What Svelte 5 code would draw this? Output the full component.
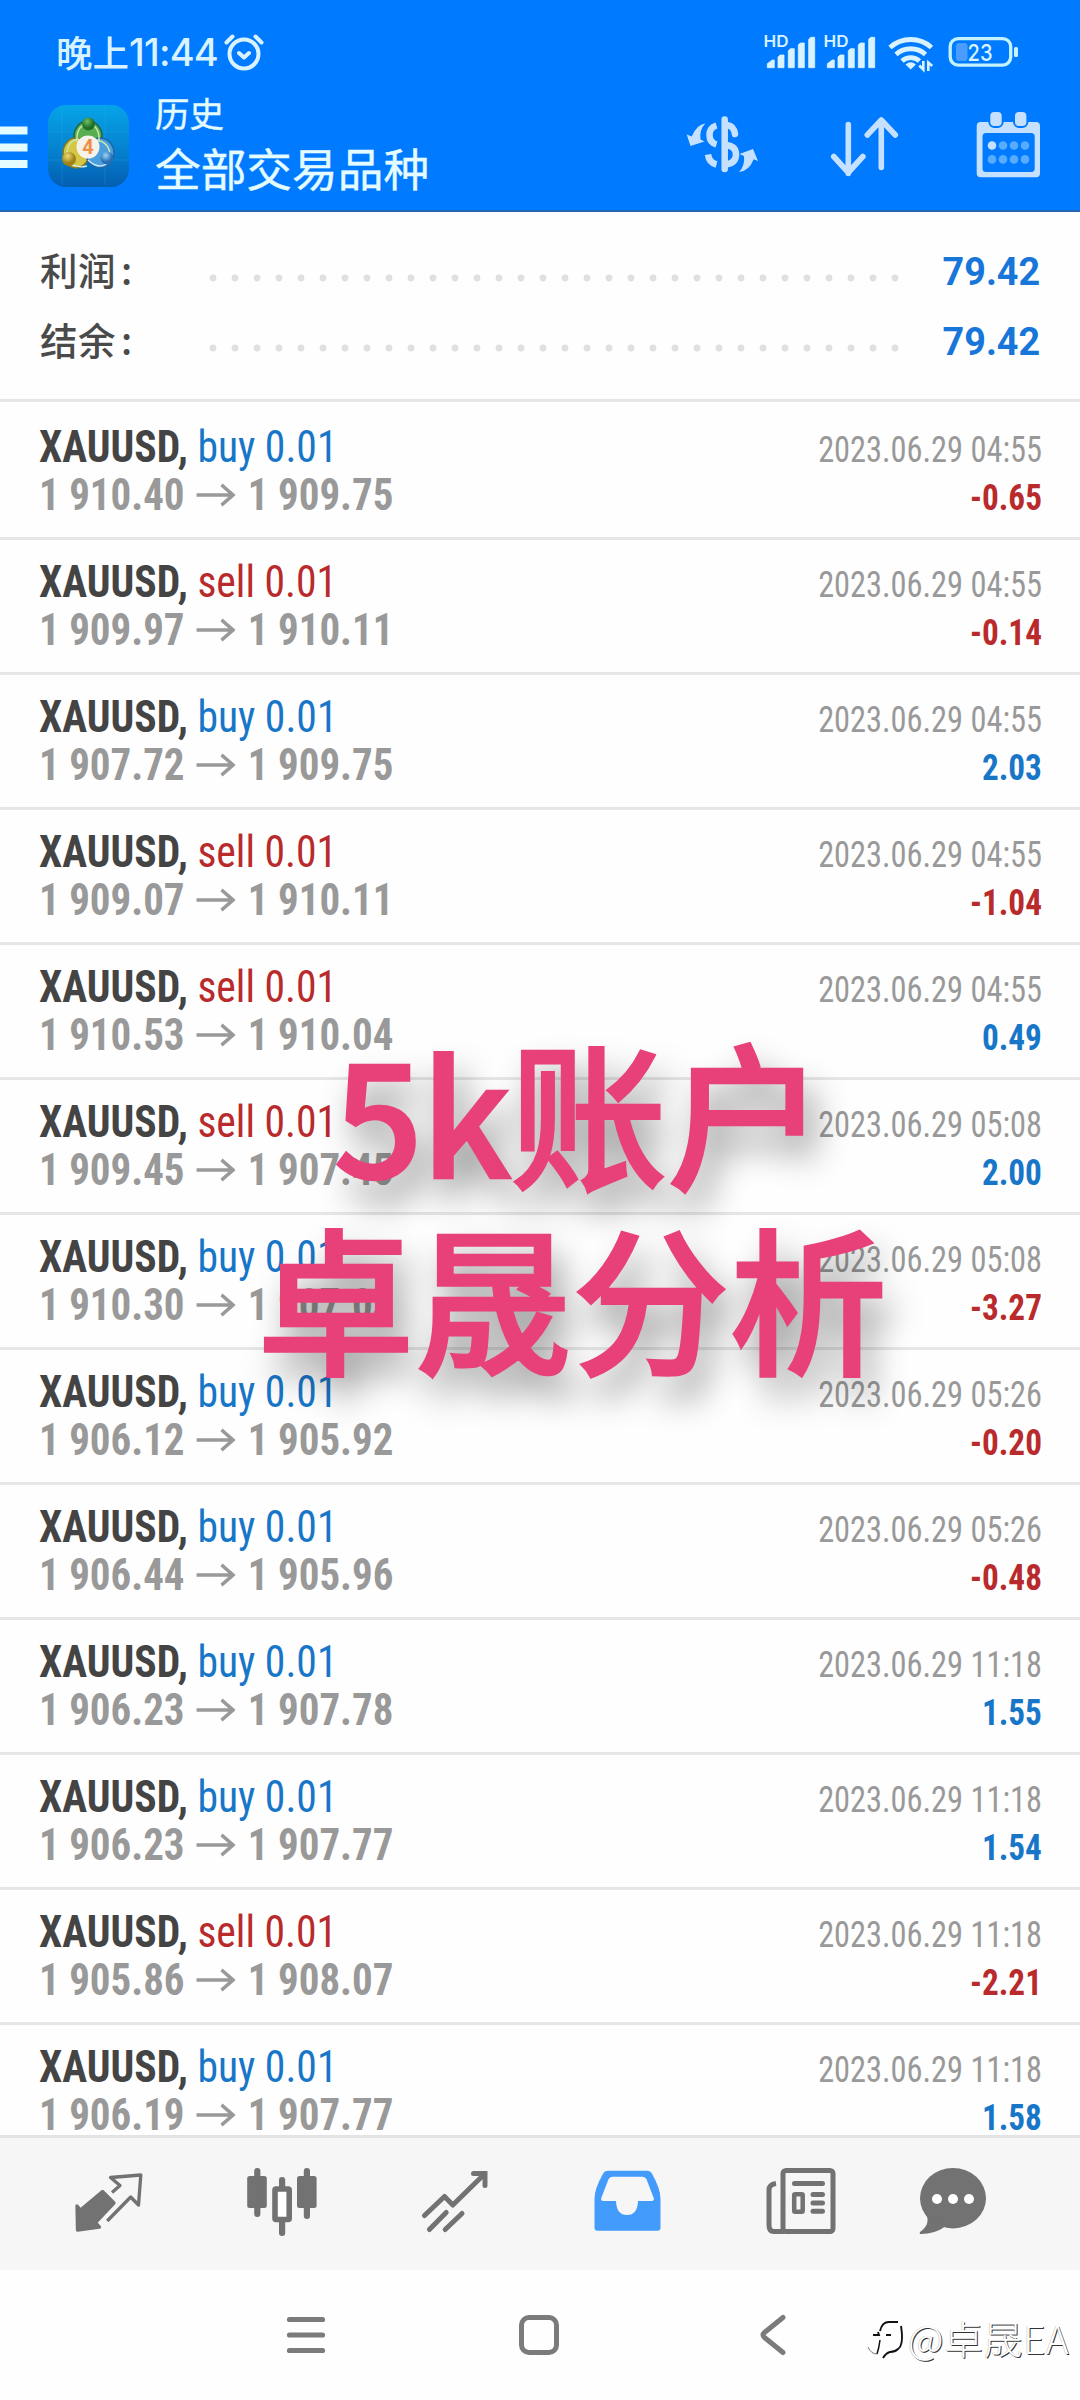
<script>
  const trades = [
    ['buy', '1 910.40', '1 909.75', '04:55', '-0.65'],
    ['sell', '1 909.97', '1 910.11', '04:55', '-0.14'],
    ['buy', '1 907.72', '1 909.75', '04:55', '2.03'],
    ['sell', '1 909.07', '1 910.11', '04:55', '-1.04'],
    ['sell', '1 910.53', '1 910.04', '04:55', '0.49'],
    ['sell', '1 909.45', '1 907.45', '05:08', '2.00'],
    ['buy', '1 910.30', '1 907.03', '05:08', '-3.27'],
    ['buy', '1 906.12', '1 905.92', '05:26', '-0.20'],
    ['buy', '1 906.44', '1 905.96', '05:26', '-0.48'],
    ['buy', '1 906.23', '1 907.78', '11:18', '1.55'],
    ['buy', '1 906.23', '1 907.77', '11:18', '1.54'],
    ['sell', '1 905.86', '1 908.07', '11:18', '-2.21'],
    ['buy', '1 906.19', '1 907.77', '11:18', '1.58']
  ].map(([side, open, close, time, profit]) => ({ side, open, close, time, profit }));

  const summary = [
    { label: '利润', value: '79.42' },
    { label: '结余', value: '79.42' }
  ];
  const dots = Array.from({ length: 32 }, (_, i) => 4 + i * 22);
</script>

{#snippet signal()}
  <svg width="60" height="50" viewBox="0 0 60 50" fill="#d8f3ff">
    <text x="3.5" y="17.3" font-size="15.5" font-weight="600" textLength="25" lengthAdjust="spacingAndGlyphs">HD</text>
    <path d="M7.3 37.7v-4l5-3.7h2v7.7zM18 37.7V27l2-2h4v12.7zM28.3 37.7v-17l2-2h4v19zM38.3 37.7V15l2-2h4v24.7zM48.7 37.7V9.300l2-2h4v30.400z" stroke="#d8f3ff" stroke-width=".8" stroke-linejoin="round" />
  </svg>
{/snippet}

<main class="screen">
  <header>
    <div class="status">
      <span class="clock"><span class="cjk">晚上</span><span class="time">11:44</span></span>
      <svg class="alarm" width="44" height="44" viewBox="0 0 44 44" fill="none" stroke="#d8f3ff" stroke-width="4" stroke-linecap="round" stroke-linejoin="round">
        <circle cx="22" cy="24" r="14.500" /><path d="M17 23l5 4.500 5-4.500M4.500 12.500l6-6M39.500 12.500l-6-6" />
      </svg>
      <div class="indicators">
        {@render signal()}
        {@render signal()}
        <svg width="65" height="50" viewBox="0 0 65 50" fill="none" stroke="#d8f3ff" stroke-width="4.900">
          <path d="M10 17.500a31 31 0 0 1 41.500 0M16 24.500a22 22 0 0 1 29.500 0M22 31a13 13 0 0 1 17.500 0" />
          <path d="M25.500 34.500q5.200-4.500 10.400 0l-5.200 5z" fill="#d8f3ff" stroke="none" />
          <path d="M43.300 31v8.500l-4-4M48.300 41v-8.500l4 3.500" stroke-width="2.600" />
        </svg>
        <svg width="78" height="50" viewBox="0 0 78 50">
          <rect x="5.200" y="8.600" width="60.500" height="26.500" rx="8" fill="none" stroke="#c4f2ff" stroke-width="3.300" />
          <rect x="11" y="13" width="11.500" height="18" rx="3" fill="#4a9dff" />
          <rect x="69" y="17" width="4" height="10" rx="1.500" fill="#c4f2ff" />
          <text x="22.500" y="31" font-size="23" font-weight="500" fill="#d8f3ff" textLength="25" lengthAdjust="spacingAndGlyphs">23</text>
        </svg>
      </div>
    </div>
    <div class="appbar">
      <svg class="burger" width="47" height="50" viewBox="0 0 47 50" fill="#e4fbff">
        <path d="M0 4.500h27.500v8H0zM0 21.500h27.500v8H0zM0 38h27.500v8H0z" />
      </svg>
      <svg class="logo" width="84" height="84" viewBox="0 0 84 84">
        <defs>
          <linearGradient id="bg" x1="0" y1="0" x2="0" y2="1"><stop offset="0" stop-color="#06a4e8" /><stop offset=".55" stop-color="#0582cf" /><stop offset="1" stop-color="#035db0" /></linearGradient>
          <radialGradient id="gr" cx=".4" cy=".3"><stop offset="0" stop-color="#6fc060" /><stop offset="1" stop-color="#1f6f2a" /></radialGradient>
          <radialGradient id="ye" cx=".4" cy=".3"><stop offset="0" stop-color="#f0dc70" /><stop offset="1" stop-color="#9d811a" /></radialGradient>
          <radialGradient id="bl" cx=".4" cy=".3"><stop offset="0" stop-color="#9ad6f8" /><stop offset="1" stop-color="#246eb5" /></radialGradient>
        </defs>
        <rect x="1" y="1" width="81" height="82" rx="18" fill="url(#bg)" />
        <path d="M1 28h81M1 56h81M15 3v78M58 3v78" stroke="#39b4ef" stroke-width=".7" opacity=".35" />
        <ellipse cx="41" cy="32" rx="14" ry="15" fill="#58ae50" stroke="#1c6740" stroke-width="1.500" />
        <ellipse cx="29" cy="49" rx="13" ry="15" fill="#d5c644" stroke="#807724" stroke-width="1.500" />
        <ellipse cx="53" cy="49" rx="14" ry="15" fill="#4b9edf" stroke="#2165a2" stroke-width="1.500" />
        <path d="M30 38q-1-17 11-18 12 1 11 18M20 49q1-13 12-14M50 36q13 3 13 16" fill="none" stroke="#c5e7a8" stroke-width="1.500" />
        <path d="M20 57q9 8 20 5M41 56q10 10 20 3" fill="none" stroke="#d0eafa" stroke-width="1.300" />
        <circle cx="41.500" cy="20" r="6.500" fill="url(#gr)" />
        <circle cx="22" cy="55" r="7" fill="url(#ye)" />
        <circle cx="60" cy="54" r="6.500" fill="url(#bl)" />
        <circle cx="41" cy="43" r="11.500" fill="#f5f2e9" />
        <text x="41" y="50" text-anchor="middle" font-size="20" font-weight="700" fill="#ee8f45">4</text>
      </svg>
      <div class="titles">
        <span class="sub">历史</span>
        <span class="title">全部交易品种</span>
      </div>
      <div class="actions">
        <svg width="80" height="80" viewBox="0 0 80 80" fill="none" stroke="#c6e1ff" stroke-width="6.500">
          <path d="M42.700 15.500v49.500" stroke-linecap="round" />
          <path d="M45 21q7 1 8 9M44 41q10 1 10 9.500T44 60.500" stroke-linecap="round" />
          <path d="M34.500 21.500q-7 2-7 9.500t7 9.500M26 50.500q1 8 8.500 10" />
          <path d="M4.700 30.500l5 2q5-12 13.600-13-6 6-4.800 16l4 2-14 4.500zM57.500 50l13.500-5 5 12-4.300-1.700q-4.700 12-14.700 12.700 6-6 5-16z" fill="#c6e1ff" stroke="none" />
        </svg>
        <svg width="80" height="80" viewBox="0 0 80 80" fill="none" stroke="#c6e1ff" stroke-width="5.600" stroke-linecap="round" stroke-linejoin="round">
          <path d="M23.300 20.500v49M8.700 52.500l14.600 16 14.600-16M56.300 63.500v-47M42.300 31l14-15 14 15" />
        </svg>
        <svg width="80" height="80" viewBox="0 0 80 80" fill="#c6e1ff">
          <path fill-rule="evenodd" d="M12.700 18h55.300q4 0 4 4v47.300q0 4-4 4H12.700q-4 0-4-4V22q0-4 4-4zM18 29q-3.500 0-3.500 3.500V64.500q0 3.500 3.500 3.500h45.200q3.500 0 3.500-3.500V32.500q0-3.500-3.500-3.500z" />
          <g stroke="#007aff" stroke-width="2"><rect x="21.300" y="7" width="13.400" height="16" rx="5" /><rect x="46" y="7" width="13.400" height="16" rx="5" /></g>
          <circle cx="24" cy="41.500" r="4.300" />
          <g fill="#58acff"><circle cx="35" cy="41.500" r="4.300" /><circle cx="46" cy="41.500" r="4.300" /><circle cx="57" cy="41.500" r="4.300" /><circle cx="24" cy="55.400" r="4.300" /><circle cx="35" cy="55.400" r="4.300" /><circle cx="46" cy="55.400" r="4.300" /><circle cx="57" cy="55.400" r="4.300" /></g>
        </svg>
      </div>
    </div>
  </header>

  <section class="summary">
    {#each summary as item}
      <div class="sumrow">
        <span class="label">{item.label}<i>:</i></span>
        <svg class="leader" width="700" height="8" viewBox="0 0 700 8" fill="#e0e0e0">
          {#each dots as x}<circle cx={x} cy="4" r="3.400" />{/each}
        </svg>
        <b class="value">{item.value}</b>
      </div>
    {/each}
  </section>

  <section class="list">
    {#each trades as t}
      <article>
        <div class="left">
          <div class="name"><b>XAUUSD,</b> <span class={t.side}>{t.side} 0.01</span></div>
          <div class="prices">
            <span class="price">{t.open}</span>
            <svg width="42" height="24" viewBox="0 0 42 24" fill="none" stroke="#999" stroke-width="3.600"><path d="M0 12h39M27 1.800L39.500 12 27 22.200" /></svg>
            <span class="price">{t.close}</span>
          </div>
        </div>
        <div class="right">
          <div class="date">2023.06.29 {t.time}</div>
          <div class="profit" class:loss={t.profit.startsWith('-')}>{t.profit}</div>
        </div>
      </article>
    {/each}
  </section>

  <nav class="tabs">
    <svg width="80" height="80" viewBox="0 0 80 80" fill="none" stroke="#727272" stroke-width="3.300" stroke-linejoin="round">
      <path d="M8 45l3.500 4L33.500 30.500 45 42 26.500 61.500l4 4.500L8.500 69z" fill="#727272" />
      <path d="M43 31.500l8-7-9.500-8L71.800 14 69.500 44l-7.800-8-23.500 24" />
    </svg>
    <svg width="80" height="80" viewBox="0 0 80 80" fill="#727272">
      <rect x="5.200" y="15" width="19.600" height="32" rx="2.500" /><rect x="12.200" y="7" width="6.200" height="49" rx="3" />
      <rect x="55" y="15" width="19.600" height="32" rx="2.500" /><rect x="61.800" y="7" width="6.200" height="51" rx="3" />
      <rect x="37" y="16" width="6.200" height="12" rx="3" /><rect x="37" y="58" width="6.200" height="17" rx="3" />
      <rect x="33" y="28" width="14.200" height="30.500" rx="1" fill="#fff" stroke="#727272" stroke-width="5.600" />
    </svg>
    <svg width="80" height="80" viewBox="0 0 80 80" fill="none" stroke="#727272" stroke-width="5" stroke-linecap="round">
      <path d="M9.500 54.500L29.500 35.500l8.300 8.500L69 13.500M14.400 68.500l16.800-17M30.200 68.500l16.800-16" stroke-linejoin="round" /><path d="M58.500 12.500H70v12" />
    </svg>
    <svg width="80" height="80" viewBox="0 0 80 80" fill="#439cfb">
      <path fill-rule="evenodd" d="M20 9.700h39q3.500 0 5 3 8.500 15 8.500 25v29q0 3-3 3h-60q-3 0-3-3v-29q0-10 8.500-25 1.500-3 5-3zM24.500 15.700q-3 0-4 2.500L13.300 37q-.8 3 2 3H28q.5 14 11 14t11-14h13.700q2.800 0 2-3L58.500 18.200q-1-2.500-4-2.500z" />
    </svg>
    <svg width="80" height="80" viewBox="0 0 80 80" fill="none" stroke="#727272" stroke-width="5">
      <rect x="22" y="9.500" width="50" height="61" rx="3" /><path d="M15 22.500q-7 1-7 6.500v35q0 6.500 5 6.500h10" />
      <path d="M33.500 22.500h28M52 33.500h9.500M52 42h9.500M52 50.300h9.500" stroke-linecap="round" /><rect x="33.200" y="33.200" width="8.500" height="17.500" rx="1" stroke-width="4.500" />
    </svg>
    <svg width="80" height="80" viewBox="0 0 80 80" fill="#727272">
      <ellipse cx="40" cy="37.200" rx="33" ry="30.200" /><path d="M13 53q5 10-6 18-1 2 1 2 14 0 25-8z" />
      <g fill="#fff"><circle cx="24" cy="38" r="5" /><circle cx="40" cy="38" r="5" /><circle cx="56" cy="38" r="5" /></g>
    </svg>
  </nav>

  <nav class="system">
    <svg width="50" height="50" viewBox="0 0 50 50" stroke="#7b7b7b" stroke-width="5.200" stroke-linecap="round"><path d="M8.500 9.500h33M8.500 25h33M8.500 40.500h33" /></svg>
    <svg width="50" height="50" viewBox="0 0 50 50" fill="none" stroke="#7b7b7b" stroke-width="5"><rect x="7.500" y="7.500" width="35" height="35" rx="7.500" /></svg>
    <svg width="50" height="50" viewBox="0 0 50 50" fill="none" stroke="#7b7b7b" stroke-width="5" stroke-linecap="round" stroke-linejoin="round"><path d="M35 7.500L16.500 22.500q-3 2.500 0 5L35 42.500" /></svg>
  </nav>

  <div class="overlay"><div class="line1"><span>5k</span>账户</div><div>卓晟分析</div></div>

  <div class="credit">
    <svg width="40" height="46" viewBox="0 0 40 46" fill="none">
      <g stroke="#111" stroke-width="1.900"><path d="M14 17q2-9 9-9h9" /><path d="M35 12q3 19-3 23-3 3-8 3-4 1-7 6" /><path d="M7 21h6l-1-3M20 21h5" /><path d="M14 26q-1 8-3 14" stroke-width="1.500" /><path d="M2 33q3 7 9 7" stroke="#777" stroke-width="1" /></g>
    </svg>
    <span>@卓晟EA</span>
  </div>
</main>

<style>
  :global(body) { margin: 0; background: #fff; }
  .screen {
    position: relative; width: 1080px; height: 2400px; overflow: hidden; background: #fefefe;
    display: flex; flex-direction: column; font-family: Roboto, 'Noto Sans CJK SC', sans-serif;
  }
  svg { display: block; flex: none; }
  header { height: 212px; box-sizing: border-box; background: #007aff; border-bottom: 2px solid #2464b4; color: #e4fbff; flex: none; }
  .status { height: 100px; display: flex; align-items: flex-start; padding: 30px 57px 0 56px; box-sizing: border-box; }
  .clock { display: flex; line-height: 44px; color: #d8f3ff; font-weight: 500; }
  .clock .cjk { font-family: 'Noto Sans CJK SC', sans-serif; font-size: 36.500px; }
  .clock .time { font-family: Inter, sans-serif; font-size: 38px; letter-spacing: -0.8px; }
  .alarm { margin-left: 4px; }
  .indicators { display: flex; margin-left: auto; font-family: Inter, sans-serif; }
  .appbar { display: flex; height: 110px; align-items: flex-start; }
  .burger { margin-top: 22px; }
  .logo { margin-top: 4px; }
  .titles { display: flex; flex-direction: column; margin-left: 24px; font-family: 'Noto Sans CJK SC', sans-serif; -webkit-text-stroke: 0.4px #e4fbff; }
  .sub { font-size: 34.500px; line-height: 40px; margin-top: -8px; }
  .title { font-size: 45.700px; line-height: 56px; margin-top: 7px; }
  .actions { display: flex; gap: 63px; margin: 4px 32px 0 auto; }
  .summary { flex: none; height: 190px; box-sizing: border-box; padding: 24px 40px 0; border-bottom: 3px solid #e6e6e6; }
  .sumrow { display: flex; align-items: center; height: 70px; }
  .label { width: 169px; margin-top: -6px; font: 500 37.500px 'Noto Sans CJK SC', sans-serif; letter-spacing: 0.5px; color: #4a4a4a; }
  .label i { font-style: normal; margin-left: 5px; }
  .leader { margin-top: 14px; }
  .value { margin-left: auto; font-size: 39.500px; transform: scaleX(0.955); transform-origin: right; color: #1876d8; }
  .list { height: 1733px; padding-top: 3px; box-sizing: border-box; overflow: hidden; flex: none; }
  article { display: flex; justify-content: space-between; height: 135px; box-sizing: border-box; border-bottom: 3px solid #e6e6e6; padding: 18px 38px 0 39px; }
  .name, .prices { font-size: 44px; line-height: 48px; height: 48px; white-space: pre; color: #444; font-stretch: 75%; transform-origin: left; }
  .name { transform: scaleX(0.945); }
  .prices { display: flex; align-items: center; color: #999; font-weight: 700; gap: 13px; transform: scaleX(0.931); }
  .buy { color: #1876c8; }
  .sell { color: #b92a2c; }
  .right { text-align: right; font-size: 36px; line-height: 48px; color: #999; font-stretch: 75%; padding-top: 3px; }
  .date, .profit { transform-origin: right; white-space: nowrap; }
  .date { transform: scaleX(0.899); }
  .profit { font-weight: 700; color: #1876c8; transform: scaleX(0.922); }
  .profit.loss { color: #b92a2c; }
  .tabs { flex: none; height: 135px; box-sizing: border-box; border-top: 3px solid #e3e3e3; background: #f6f6f6; padding: 23px 0 0 22px; display: grid; grid-template-columns: repeat(5, 173px) 132px; justify-items: center; align-items: start; }
  .system { flex: none; height: 130px; display: grid; grid-template-columns: repeat(3, 233.500px); padding-left: 189px; justify-items: center; align-items: center; background: #fefefe; }
  .overlay { position: absolute; left: 257px; top: 1017px; width: 630px; text-align: center; font: 500 157.500px/185px 'Noto Sans CJK SC', sans-serif; color: #e8417a; -webkit-text-stroke: 2.500px #e8417a; text-shadow: 10px 22px 34px rgba(0, 0, 0, 0.45); white-space: nowrap; }
  .line1 { padding-left: 14px; }
  .line1 span { letter-spacing: -2px; }
  .credit { position: absolute; left: 866px; top: 2314px; display: flex; align-items: center; gap: 2px; font: 300 39px/44px 'Noto Sans CJK SC', sans-serif; letter-spacing: 0.5px; color: #fff; text-shadow: 1px 1px 0.500px #333, -0.500px -0.500px 0.500px #bbb; }
  .credit span { white-space: nowrap; }
</style>
